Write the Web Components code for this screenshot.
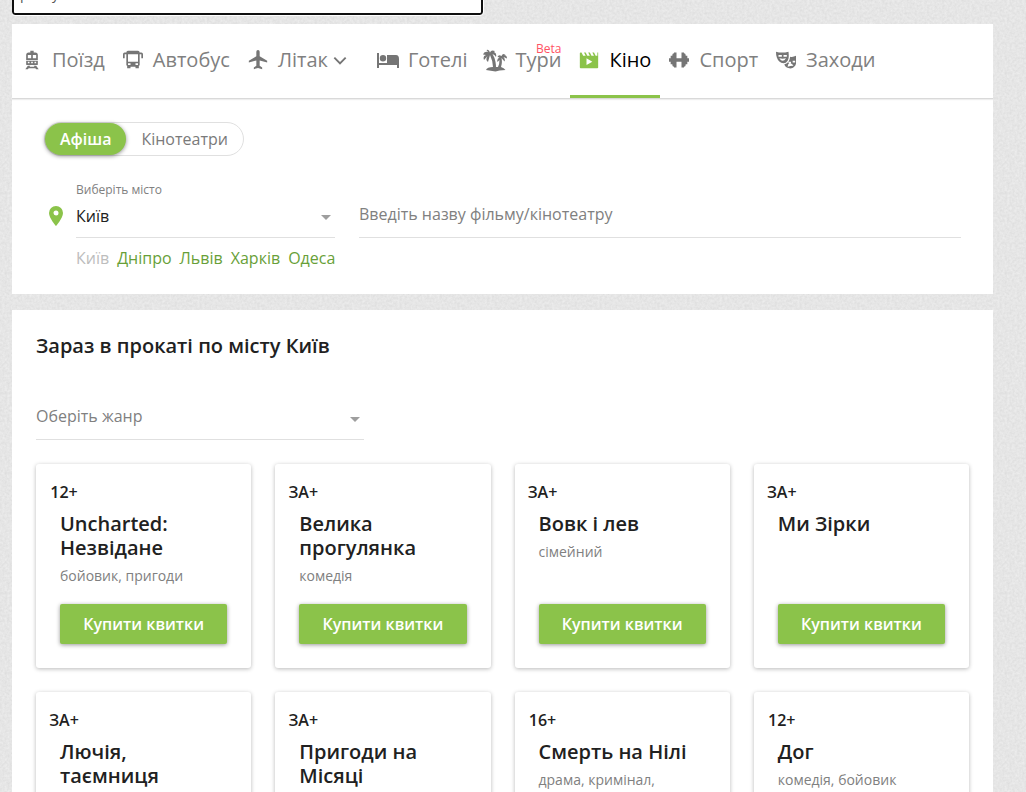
<!DOCTYPE html>
<html lang="uk">
<head>
<meta charset="utf-8">
<meta name="viewport" content="width=device-width, initial-scale=1">
<title>Кіно — Київ</title>
<style>
html { height: 100%; overflow: hidden; }
body {
  margin: 0; height: 100%; overflow: hidden;
  font: 400 16px/24px "Open Sans", "Noto Sans", sans-serif;
  color: #212121;
  background-color: #e5e5e5;
  background-image: url("data:image/svg+xml,%3Csvg xmlns='http://www.w3.org/2000/svg' width='200' height='200'%3E%3Cfilter id='n' color-interpolation-filters='sRGB' x='0' y='0' width='1' height='1'%3E%3CfeTurbulence type='fractalNoise' baseFrequency='.4' numOctaves='3' seed='4' stitchTiles='stitch'/%3E%3CfeColorMatrix values='.08 0 0 0 .86 .08 0 0 0 .86 .08 0 0 0 .86 0 0 0 0 1'/%3E%3C/filter%3E%3Crect width='200' height='200' filter='url(%23n)'/%3E%3C/svg%3E");
}
</style>
</head>
<body>
<cinema-page></cinema-page>
<script>
const html = (s) => { const t = document.createElement('template'); t.innerHTML = s; return t; };
const define = (name, tpl, setup) => customElements.define(name, class extends HTMLElement {
  constructor() {
    super();
    this.attachShadow({ mode: 'open' }).append(html(tpl).content.cloneNode(true));
  }
  connectedCallback() { if (setup) setup(this, this.shadowRoot); }
});

const ICONS = {
  train: '<path fill-rule="evenodd" d="M10 1h4v2h2q3 0 3 3v11q0 1-1 1H6q-1 0-1-1V6q0-3 3-3h2zM7 6v4h4V6zm6 0v4h4V6zM5 12v1h14v-1zM7 14v2h2v-2zm4 0v2h2v-2zm4 0v2h2v-2zM7 19h3l-1 1h6l-1-1h3l3 4h-3l-1-1H8l-1 1H4z"/>',
  bus: '<path fill-rule="evenodd" d="M6 1h12q2 0 2 2h2q2 0 2 2v5h-2V5h-2v13q0 1-1 1v3h-4v-2H9v2H5v-3q-1 0-1-1V5H2v5H0V5q0-2 2-2h2q0-2 2-2zM6 5v9h12V5zm0 11v2h3v-2zm9 0v2h3v-2z"/>',
  plane: '<path d="M23 15v-2l-9-5.500V2q0-2-2-2t-2 2v5.500L1 13v2l9-2.500V19l-3 2v2l5-1.500 5 1.500v-2l-3-2v-6.500z"/>',
  chevron: '<path d="M4.500 7.500 12 15l7.500-7.500 2 2L12 19 2.500 9.500z"/>',
  bed: '<path d="M1 5h2v10h8V7h9q3 0 3 4v9h-2v-3H3v3H1zM7 7a3.200 3.200 0 1 1 0 6.400A3.200 3.200 0 0 1 7 7z"/>',
  palm: '<path d="M7 4.500Q8 1.500 12 3l-1 1q3 1 2 5-1-2-3.500-3 2.500 4 3 8 .5 3 .5 5h2q1.500-3 1.500-7l-2 2q-1-3 2-4.500l-2-.5q1-3 4-1 1-3 4-1.500L21 7q3 0 3 3.500L20.500 9q2 2 1 4.500L18.500 10q1 5-.5 9 3 1 4.500 3l-6 .5-4 1L3 22q1-3 7-3-.5-7-3-12l-2 7q-3-2-.5-6L1 12q-1.500-4 2-5L0 6.500Q1 3 5 4L3.500 2Q6 1 7 4.500z"/>',
  movie: '<path fill-rule="evenodd" d="M2 3h1l2 4h3L6 3h2l2 4h3l-2-4h2l2 4h3l-2-4h2l2 4h2V3h1v18q0 1-1 1H2q-1 0-1-1V4q0-1 1-1zM9 10v8l7-4z"/>',
  dumbbell: '<path d="M0 10h2V7h2V6q0-2 2-2V3h3v7h6V3h3v1q2 0 2 2v1h2v3h2v4h-2v3h-2v1q0 2-2 2v1h-3v-7H9v7H6v-1q-2 0-2-2v-1H2v-3H0z"/>',
  masks: '<path fill-rule="evenodd" d="M0 2q7 2 15 0 1 8-1 11-2 3-5 3-6-1-8-7Q0 7 0 2zm3 4v2h4V6zm6 0v2h4V6zM4 10q4 6 8 0-4 1-8 0z"/><path fill-rule="evenodd" d="M17 8q3 1 7-1 1 9-1 12-3 4-7 3-5-1-6-5 6-1 7-9zm-2 6v2h3v-2zm5-1v2h3v-2zM14 20q3-1 7-1-2-4-5-3-2 1-2 4z"/>',
  pin: '<path fill-rule="evenodd" d="M12 2a7 7 0 0 0-7 7c0 5 7 13 7 13s7-8 7-13a7 7 0 0 0-7-7zm0 4.500a2.500 2.500 0 1 1 0 5 2.500 2.500 0 0 1 0-5z"/>'
};

define('ui-icon', `<style>
:host { display: block; flex: none; width: 20px; height: 20px; }
svg { display: block; width: 100%; height: 100%; fill: currentColor; }
</style><svg viewBox="0 0 24 24" aria-hidden="true"></svg>`,
(el, r) => { r.querySelector('svg').innerHTML = ICONS[el.getAttribute('name')] || ''; });

define('nav-item', `<style>
:host { display: block; position: relative; }
a { display: flex; align-items: center; gap: 10px; height: 74px; padding: 0 9px 2px; box-sizing: border-box;
  color: #808080; font-size: 20px; line-height: 28px; text-decoration: none; white-space: nowrap; }
.label { position: relative; }
sup { position: absolute; right: 0; top: -5px; font-size: 12px; line-height: 16px; color: #ff5263; }
sup:empty { display: none; }
:host([active]) a { color: #000; border-bottom: 3px solid #8bc34a; padding-top: 1px; padding-bottom: 0; }
:host([active]) ui-icon { color: #8bc34a; }
ui-icon { color: #757575; }
ui-icon[name=bed], ui-icon[name=palm] { width: 24px; height: 24px; margin: 0 -2px; }
.more { margin-left: -6px; width: 16px; height: 16px; }
</style><a href="#"><ui-icon></ui-icon><span class="label"><slot></slot><sup></sup></span></a>`,
(el, r) => {
  r.querySelector('ui-icon').setAttribute('name', el.getAttribute('icon'));
  r.querySelector('ui-icon').connectedCallback();
  r.querySelector('sup').textContent = el.getAttribute('badge') || '';
  if (el.hasAttribute('more')) r.querySelector('a').append(html('<ui-icon class="more" name="chevron"></ui-icon>').content);
});

define('service-nav', `<style>
:host { display: block; background: #fff; border-bottom: 1px solid #d9d9d9; box-shadow: 0 1px 1px #eee; position: relative; }
nav { display: flex; padding: 0 1px; }
.gap { margin-left: 12px; }
</style><nav>
<nav-item icon="train">Поїзд</nav-item>
<nav-item icon="bus">Автобус</nav-item>
<nav-item icon="plane" more>Літак</nav-item>
<nav-item class="gap" icon="bed">Готелі</nav-item>
<nav-item icon="palm" badge="Beta">Тури</nav-item>
<nav-item icon="movie" active>Кіно</nav-item>
<nav-item icon="dumbbell">Спорт</nav-item>
<nav-item icon="masks">Заходи</nav-item>
</nav>`);

define('view-switch', `<style>
:host { display: flex; width: max-content; border: 1px solid #e0e0e0; border-radius: 17px; }
button { height: 32px; border: 0; border-radius: 16px; background: none; padding: 0 15px; font: inherit; line-height: 24px; color: #7a7a7a; }
button[aria-pressed=true] { background: #8bc34a; color: #fff; font-weight: 600; box-shadow: 0 1px 4px rgba(0,0,0,.45); }
</style><button aria-pressed="true">Афіша</button><button aria-pressed="false">Кінотеатри</button>`);

define('select-field', `<style>
:host { display: block; border-bottom: 1px solid #e0e0e0; }
label { display: block; height: 16px; font-size: 12px; line-height: 16px; color: #808080; }
.box { display: grid; align-items: center; }
.box > * { grid-area: 1 / 1; }
select { appearance: none; width: 100%; height: 39px; border: 0; padding: 0 32px var(--lift, 4px) 0; background: none;
  font: inherit; color: var(--value-color, #212121); }
i { justify-self: end; margin-right: 4px; border: 5px solid transparent; border-top-color: #9e9e9e; border-bottom: 0; pointer-events: none; }
</style><label for="s"></label><div class="box"><select id="s"></select><i></i></div>`,
(el, r) => {
  const label = r.querySelector('label');
  if (el.hasAttribute('label')) label.textContent = el.getAttribute('label');
  else r.querySelector('select').setAttribute('aria-label', el.getAttribute('value'));
  r.querySelector('select').add(new Option(el.getAttribute('value')));
});

define('search-panel', `<style>
:host { display: block; background: #fff; padding: 23px 32px 24px; }
.fields { display: grid; grid-template-columns: 32px 259px 1fr; padding-top: 26px; }
ui-icon { color: #8bc34a; width: 24px; height: 24px; align-self: center; margin-top: 12px; }
input { align-self: end; margin-left: 24px; height: 47px; padding: 0; border: 0; border-bottom: 1px solid #e0e0e0; outline: 0; min-width: 0; background: none; font: inherit; color: #212121; }
input::placeholder { color: #808080; opacity: 1; }
.cities { display: flex; gap: 8px; grid-column: 2 / -1; padding-top: 8px; }
a { color: #689f38; text-decoration: none; }
a.on { color: #bdbdbd; }
</style><view-switch></view-switch>
<div class="fields">
<ui-icon name="pin"></ui-icon>
<select-field label="Виберіть місто" value="Київ"></select-field>
<input type="text" aria-label="Назва фільму або кінотеатру" placeholder="Введіть назву фільму/кінотеатру">
<div class="cities"><a href="#" class="on">Київ</a><a href="#">Дніпро</a><a href="#">Львів</a><a href="#">Харків</a><a href="#">Одеса</a></div>
</div>`);

define('movie-card', `<style>
:host { display: flex; flex-direction: column; box-sizing: border-box; min-height: 204px; min-width: 0; padding: 16px 24px 24px;
  background: #fff; border-radius: 3px; box-shadow: 0 1px 4px rgba(0,0,0,.28); }
.age { width: 56px; margin-left: -24px; text-align: center; font-weight: 600; line-height: 24px; }
h3 { margin: 8px 0 4px; font-size: 20px; line-height: 24px; font-weight: 600; }
p { margin: 0 0 16px; font-size: 14px; line-height: 24px; color: #808080; }
button { margin-top: auto; height: 40px; flex: none; border: 0; border-radius: 2px; background: #8bc34a; color: #fff; font: inherit; font-weight: 600; box-shadow: 0 1px 4px rgba(0,0,0,.4); }
</style><div class="age"></div><h3><slot></slot></h3><p></p><button>Купити квитки</button>`,
(el, r) => {
  r.querySelector('.age').textContent = el.getAttribute('age');
  r.querySelector('p').textContent = el.getAttribute('genre');
});

define('movie-list', `<style>
:host { display: block; background: #fff; margin-top: 16px; padding: 24px; }
h2 { margin: 0; font-size: 20px; line-height: 24px; font-weight: 600; }
select-field { max-width: 328px; margin-top: 26px; --value-color: #808080; --lift: 8px; }
.grid { display: grid; grid-template-columns: repeat(4, minmax(0, 1fr)); gap: 24px; margin-top: 24px; }
</style><h2>Зараз в прокаті по місту Київ</h2>
<select-field value="Оберіть жанр"></select-field>
<div class="grid">
<movie-card age="12+" genre="бойовик, пригоди">Uncharted: Незвідане</movie-card>
<movie-card age="ЗА+" genre="комедія">Велика прогулянка</movie-card>
<movie-card age="ЗА+" genre="сімейний">Вовк і лев</movie-card>
<movie-card age="ЗА+" genre="">Ми Зірки</movie-card>
<movie-card age="ЗА+" genre="">Лючія, таємниця</movie-card>
<movie-card age="ЗА+" genre="">Пригоди на Місяці</movie-card>
<movie-card age="16+" genre="драма, кримінал,">Смерть на Нілі</movie-card>
<movie-card age="12+" genre="комедія, бойовик">Дог</movie-card>
</div>`);

define('top-search', `<style>
:host { display: block; height: 24px; }
.clip { height: 24px; display: flex; align-items: end; overflow: hidden; }
input { box-sizing: border-box; width: 48%; height: 40px; margin-bottom: 9px; border: 2px solid #101010; border-radius: 3px; outline: 1px solid #fff; background: #fff; padding: 0 6px 4px; font: 400 14px/20px "Open Sans", sans-serif; color: #555; }
</style><div class="clip"><input type="text" aria-label="Пошук" value="рейсу"></div>`);

define('cinema-page', `<style>
:host { display: block; padding: 0 33px 0 12px; }
</style><top-search></top-search><service-nav></service-nav><search-panel></search-panel><movie-list></movie-list>`);
</script>
</body>
</html>
